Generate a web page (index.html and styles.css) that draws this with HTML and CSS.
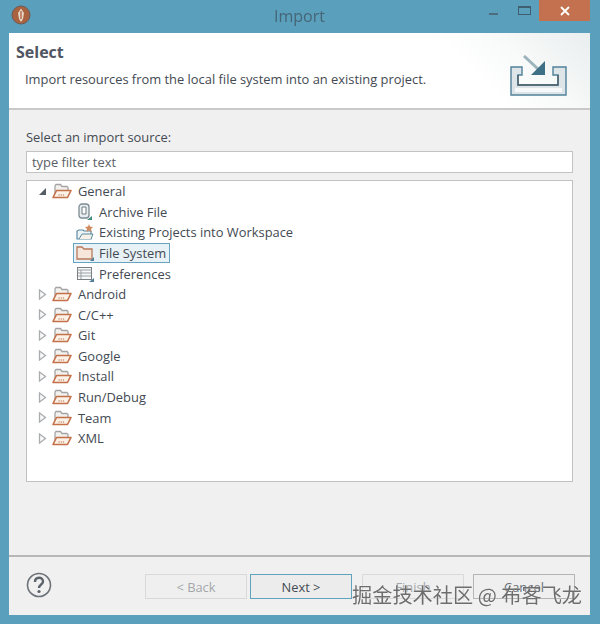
FILE: index.html
```html
<!DOCTYPE html>
<html lang="en">
<head>
<meta charset="utf-8">
<title>Import</title>
<link rel="stylesheet" href="styles.css">
</head>
<body>
<svg class="defs" width="0" height="0" aria-hidden="true">
  <symbol id="folder" viewBox="0 0 20 16">
    <path d="M3 13V3L4 1.500h4.500l1.500 2h5l1 1V7" fill="#f2f1ee" stroke="#a4a4a4" stroke-width="1.300"/>
    <path d="M1 14.500 4.500 7.500H19l-3.500 7Z" fill="#fbf1e6" stroke="#c4714a" stroke-width="1.600" stroke-linejoin="round"/>
    <path d="M6.500 12h1.200m1 0h1.200m1 0h1.200" stroke="#b86f4e" stroke-width="1.200"/>
  </symbol>
  <symbol id="closed" viewBox="0 0 9 11">
    <path d="M1.500 1 7.500 5.500 1.500 10Z" fill="#fafafa" stroke="#a9adb0" stroke-width="1.300"/>
  </symbol>
</svg>
<div class="window">
  <div class="frame">
    <header class="titlebar">
      <svg class="app-icon" width="20" height="20" viewBox="0 0 20 20">
        <circle cx="10" cy="10" r="9" fill="#a9623f" stroke="#6d5a55" stroke-width="1"/>
        <path d="M10 3.500 13 8 12 14 10 17 8 14 7 8Z" fill="#e7d6c6"/>
        <path d="M10 6v8" stroke="#a9623f" stroke-width="1.300"/>
      </svg>
      <span class="title">Import</span>
      <div class="controls">
        <span class="minimize"></span>
        <span class="maximize"></span>
        <span class="close">
          <svg width="10" height="10" viewBox="0 0 10 10"><path d="M1 1l8 8M9 1 1 9" stroke="#fff" stroke-width="1.800"/></svg>
        </span>
      </div>
    </header>
    <main class="client">
      <section class="banner">
        <div class="banner-text">
          <h1 class="banner-title">Select</h1>
          <p class="banner-desc">Import resources from the local file system into an existing project.</p>
        </div>
        <svg class="banner-icon" width="58" height="42" viewBox="0 0 58 42">
          <path d="M1 12H12V20H8V30H48V20H43V12H56V40H1Z" fill="#dde5e9" stroke="#4f8199" stroke-width="1.400"/>
          <path d="M8 20V30H48V20" fill="none" stroke="#4c5f69" stroke-width="1.400"/>
          <path d="M5 35H52" stroke="#f6f8f9" stroke-width="4"/>
          <path d="M14 1 28 14" stroke="#9db4bd" stroke-width="3"/>
          <path d="M35 6V20H21Z" fill="#3f7186"/>
        </svg>
      </section>
      <section class="body">
        <label class="source-label" for="filter">Select an import source:</label>
        <input class="filter" id="filter" type="text" placeholder="type filter text">
        <ul class="tree">
          <li class="row">
            <svg class="twist" width="9" height="9" viewBox="0 0 9 9"><path d="M8 1V8H1Z" fill="#555c62"/></svg>
            <svg class="folder"><use href="#folder"/></svg>
            <span>General</span>
          </li>
          <li class="row child">
            <svg class="leaf" viewBox="0 0 18 18">
              <rect x="3" y="1" width="10" height="14" rx="3" fill="#e8edf0" stroke="#7b8a92" stroke-width="1.300"/>
              <path d="M6 4h4v7H6Z" fill="#fff" stroke="#6e7d85"/>
              <path d="M11 17h5v-4Z" fill="#3f8a80"/>
            </svg>
            <span>Archive File</span>
          </li>
          <li class="row child">
            <svg class="leaf" viewBox="0 0 18 18">
              <path d="M1 16V8l2-1h4l1 1h7v8Z" fill="#eef3f6" stroke="#5b8ba3" stroke-width="1.200"/>
              <path d="M3 16 6 11H17L15 16" fill="#f6f1e6" stroke="#5b8ba3"/>
              <path d="M13 1l1 2.500 3 .5-2 2 .5 3-2.500-1.500L10.500 9 11 6 9 4l3-.5Z" fill="#d08a62"/>
            </svg>
            <span>Existing Projects into Workspace</span>
          </li>
          <li class="row child selected-row">
            <div class="selection">
              <svg class="leaf" viewBox="0 0 18 18">
                <path d="M1 15V3h5l2 2h8v10Z" fill="#f7e6da" stroke="#b87a5c" stroke-width="1.300"/>
                <path d="M14 17h4v-4Z" fill="#4f7f99"/>
              </svg>
              <span>File System</span>
            </div>
          </li>
          <li class="row child">
            <svg class="leaf" viewBox="0 0 18 18">
              <rect x="1.500" y="2.500" width="14" height="12" fill="#f7f8f8" stroke="#7a7f84"/>
              <path d="M1.500 5h14M2 8h13M2 11h13M5 5v9" stroke="#9aa0a4"/>
              <path d="M13 17h5v-4Z" fill="#4f7f99"/>
            </svg>
            <span>Preferences</span>
          </li>
          <li class="row"><svg class="twist"><use href="#closed"/></svg><svg class="folder"><use href="#folder"/></svg><span>Android</span></li>
          <li class="row"><svg class="twist"><use href="#closed"/></svg><svg class="folder"><use href="#folder"/></svg><span>C/C++</span></li>
          <li class="row"><svg class="twist"><use href="#closed"/></svg><svg class="folder"><use href="#folder"/></svg><span>Git</span></li>
          <li class="row"><svg class="twist"><use href="#closed"/></svg><svg class="folder"><use href="#folder"/></svg><span>Google</span></li>
          <li class="row"><svg class="twist"><use href="#closed"/></svg><svg class="folder"><use href="#folder"/></svg><span>Install</span></li>
          <li class="row"><svg class="twist"><use href="#closed"/></svg><svg class="folder"><use href="#folder"/></svg><span>Run/Debug</span></li>
          <li class="row"><svg class="twist"><use href="#closed"/></svg><svg class="folder"><use href="#folder"/></svg><span>Team</span></li>
          <li class="row"><svg class="twist"><use href="#closed"/></svg><svg class="folder"><use href="#folder"/></svg><span>XML</span></li>
        </ul>
      </section>
      <footer class="footer">
        <svg class="help" width="26" height="26" viewBox="0 0 26 26">
          <circle cx="13" cy="13" r="11.500" fill="none" stroke="#6c7278" stroke-width="1.600"/>
          <path d="M9 10c0-5.500 8-5.500 8-.5 0 3-4 3-4 6.500" fill="none" stroke="#5d636a" stroke-width="2.400"/>
          <circle cx="13" cy="19.500" r="1.600" fill="#5d636a"/>
        </svg>
        <div class="buttons">
          <button class="btn" disabled>&lt; Back</button>
          <button class="btn default">Next &gt;</button>
          <button class="btn finish" disabled>Finish</button>
          <button class="btn cancel">Cancel</button>
        </div>
      </footer>
    </main>
  </div>
  <div class="watermark">掘金技术社区 @ 布客飞龙</div>
</div>
</body>
</html>
```
FILE: styles.css
```css
* { box-sizing: border-box; }
html, body { margin: 0; padding: 0; }
body { width: 600px; height: 624px; overflow: hidden; font-family: "Open Sans", "Noto Sans", sans-serif; color: #484e57; }
.defs { position: absolute; }
.window { position: relative; width: 600px; height: 624px; background: #5a9fbb; }
.frame { height: 100%; display: flex; flex-direction: column; padding: 0 10px 9px 9px; filter: blur(0.35px); }
.titlebar { height: 33px; flex: none; display: flex; align-items: flex-start; position: relative; }
.app-icon { margin: 5px 0 0 2px; }
.title { position: absolute; left: 0; right: 0; top: 5px; text-align: center; font-size: 16px; line-height: 22px; color: #466678; }
.controls { margin-left: auto; display: flex; align-items: flex-start; position: relative; }
.minimize { width: 9px; height: 2px; background: #4d6d7d; margin: 13px 20px 0 0; }
.maximize { width: 13px; height: 9px; border: 1px solid #3f5f70; border-top-width: 2px; margin: 6px 8px 0 0; }
.close { width: 51px; height: 21px; background: #c4714f; display: flex; align-items: center; justify-content: center; }
.client { flex: 1; display: flex; flex-direction: column; background: #f0f0f0; min-height: 0; }
.banner { height: 77px; flex: none; background: linear-gradient(225deg, #e9eeee 0, #f8f9f9 14%, #fff 24%); border-bottom: 2px solid #c9c9c9; display: flex; justify-content: space-between; padding: 0 22px 0 7px; }
.banner-title { margin: 8px 0 0; font-size: 16px; line-height: 22px; font-weight: 700; color: #4f5562; }
.banner-desc { margin: 5px 0 0 9px; font-size: 12.900px; line-height: 22px; color: #434952; }
.banner-icon { margin-top: 22px; }
.body { flex: 1; display: flex; flex-direction: column; padding: 16px 17px 0; min-height: 0; }
.source-label { font-size: 12.900px; line-height: 22px; color: #434952; }
.filter { height: 22px; margin-top: 3px; border: 1px solid #c2c4c4; background: #fff; padding: 0 5px; font: 12.900px "Open Sans", "Noto Sans", sans-serif; color: #4a5058; border-radius: 0; outline: none; }
.filter::placeholder { color: #5a6066; opacity: 1; }
.tree { list-style: none; margin: 7px 0 0; padding: 0; height: 302px; background: #fff; border: 1px solid #bfc2c2; }
.row { height: 20.580px; display: flex; align-items: center; font-size: 12.900px; color: #434952; padding-left: 11px; white-space: nowrap; }
.twist { width: 9px; height: 11px; flex: none; }
.folder { width: 20px; height: 16px; flex: none; margin: 0 6px 0 5px; }
.child { padding-left: 49px; }
.leaf { width: 18px; height: 18px; flex: none; margin-right: 5px; }
.selected-row { padding-left: 46px; }
.selection { display: flex; align-items: center; width: 97px; height: 20px; padding-left: 2px; background: #e8f1f5; border: 1px solid #66a4bf; }
.footer { height: 60px; flex: none; border-top: 2px solid #b7b7b7; display: flex; align-items: flex-start; padding: 17px 15px 0 17px; }
.help { margin-top: -2px; }
.buttons { margin-left: auto; display: flex; }
.btn { width: 102px; height: 25px; font: 12.900px "Open Sans", "Noto Sans", sans-serif; border: 1px solid #d9d9d9; background: #efefef; color: #a3a7aa; padding: 0; border-radius: 0; margin-left: 3px; }
.default { color: #454b55; border-color: #5fa3bd; background: #ececec; }
.finish { margin-left: 10px; }
.cancel { margin-left: 9px; color: #6a6f75; border-color: #b5b5b5; }
.watermark { position: absolute; left: 352px; top: 582px; font: 20.200px/26px "Noto Sans CJK SC", sans-serif; color: #6d6d6d; white-space: nowrap; text-shadow: 0 0 1px #fff; }
```
